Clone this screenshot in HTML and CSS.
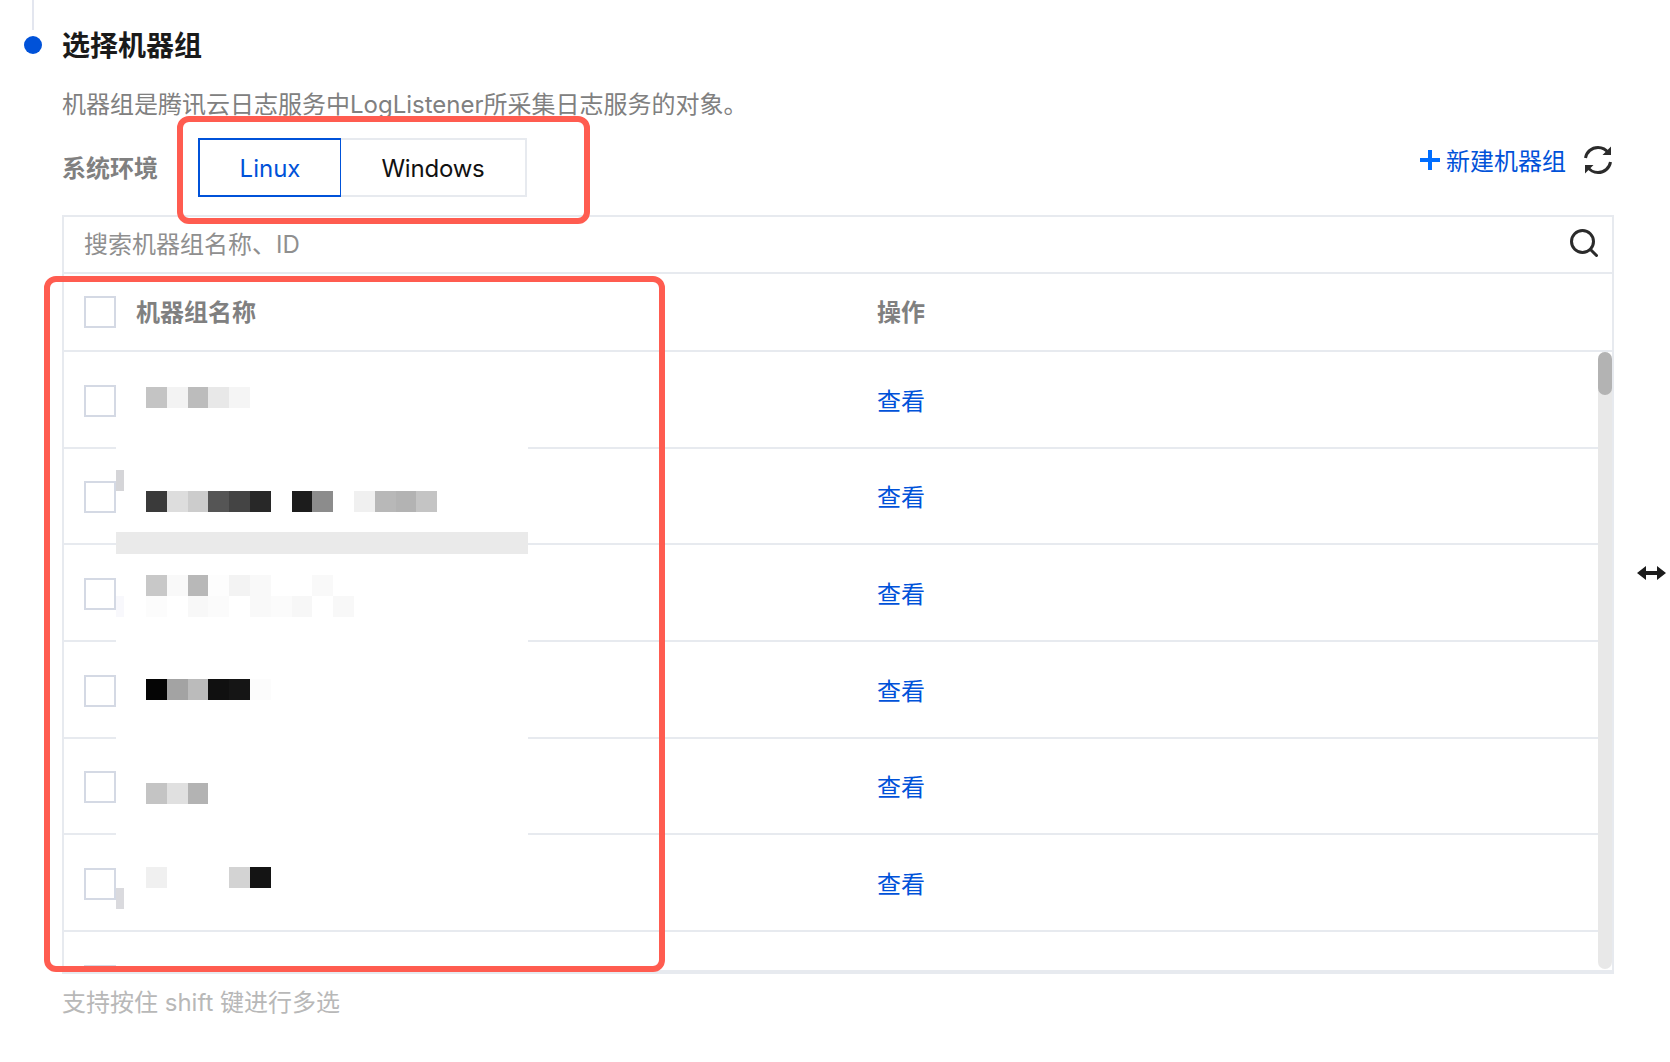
FILE: index.html
```html
<!DOCTYPE html>
<html lang="zh-CN">
<head>
<meta charset="utf-8">
<title>选择机器组</title>
<link rel="stylesheet" href="styles.css">
</head>
<body>
<main class="page">
  <div class="rail"></div>
  <h2 class="title"><span class="dot"></span><span class="title-text">选择机器组</span></h2>
  <p class="desc">机器组是腾讯云日志服务中LogListener所采集日志服务的对象。</p>

  <div class="toolbar">
    <span class="env-label">系统环境</span>
    <div class="segment">
      <button class="seg seg-on">Linux</button>
      <button class="seg seg-off">Windows</button>
    </div>
    <div class="actions">
      <a class="create">
        <svg class="plus" viewBox="0 0 20 20"><path d="M8 0h4v8h8v4h-8v8H8v-8H0V8h8z"/></svg><span class="create-text">新建机器组</span>
      </a>
      <svg class="refresh" viewBox="0 0 30 30" fill="none" stroke="#2b2b2b" stroke-width="3">
        <path d="M2.500 13C3.500 7 8.500 2.500 15 2.500c4.500 0 8 2 10.500 5.500"/>
        <path d="M27.500 17c-1 6-6 10.500-12.500 10.500-4.500 0-8-2-10.500-5.500"/>
        <path d="M28 1.500v8.500h-8.500z" fill="#2b2b2b" stroke="none"/>
        <path d="M2 28.500V20h8.500z" fill="#2b2b2b" stroke="none"/>
      </svg>
    </div>
  </div>

  <div class="search">
    <span class="placeholder">搜索机器组名称、ID</span>
    <svg class="search-icon" viewBox="0 0 28 28" fill="none" stroke="#2b2b2b" stroke-width="3">
      <circle cx="12.500" cy="12.500" r="11"/><path d="M20.500 20.500l6 6" stroke-linecap="round"/>
    </svg>
  </div>

  <div class="table">
    <div class="head">
      <span class="check check-head"></span>
      <span class="head-name">机器组名称</span>
      <span class="head-op">操作</span>
    </div>
    <div class="body">
      <div class="row">
        <span class="check"></span>
        <div class="name m1">
          <div class="mosaic"><i></i><i></i><b style="background:#c4c4c4"></b><b style="background:#f3f3f3"></b><b style="background:#bcbcbc"></b><b style="background:#e8e8e8"></b><b style="background:#f5f5f5"></b></div>
        </div>
        <a class="view">查看</a>
      </div>
      <div class="row">
        <span class="check"></span>
        <div class="name m2">
          <div class="mosaic">
            <b style="background:#d5d5d8"></b>
          </div>
          <div class="mosaic"><i></i><i></i><b style="background:#3a3a3a"></b><b style="background:#dddddd"></b><b style="background:#cccccc"></b><b style="background:#555555"></b><b style="background:#444444"></b><b style="background:#282828"></b><i></i><b style="background:#1c1c1c"></b><b style="background:#8c8c8c"></b><i></i><b style="background:#f0f0f0"></b><b style="background:#b8b8b8"></b><b style="background:#b3b3b3"></b><b style="background:#c4c4c4"></b></div>
          <div class="bar"></div>
        </div>
        <a class="view">查看</a>
      </div>
      <div class="row">
        <span class="check"></span>
        <div class="name m3">
          <div class="mosaic"><i></i><i></i><b style="background:#c8c8c8"></b><b style="background:#f9f9f9"></b><b style="background:#b8b8b8"></b><b style="background:#fdfdfd"></b><b style="background:#f3f3f3"></b><b style="background:#f9f9f9"></b><i></i><i></i><b style="background:#f9f9f9"></b></div>
          <div class="mosaic"><b style="background:#f8f8fc"></b><i></i><b style="background:#fcfcfc"></b><i></i><b style="background:#f8f8f8"></b><b style="background:#fbfbfb"></b><i></i><b style="background:#f9f9f9"></b><b style="background:#fbfbfb"></b><b style="background:#f7f7f7"></b><i></i><b style="background:#f8f8f8"></b></div>
        </div>
        <a class="view">查看</a>
      </div>
      <div class="row">
        <span class="check"></span>
        <div class="name m4">
          <div class="mosaic"><i></i><i></i><b style="background:#050505"></b><b style="background:#a3a3a3"></b><b style="background:#bbbbbb"></b><b style="background:#101010"></b><b style="background:#151515"></b><b style="background:#fcfcfc"></b></div>
        </div>
        <a class="view">查看</a>
      </div>
      <div class="row">
        <span class="check"></span>
        <div class="name m5">
          <div class="mosaic"><i></i><i></i><b style="background:#c4c4c4"></b><b style="background:#e0e0e0"></b><b style="background:#b3b3b3"></b></div>
        </div>
        <a class="view">查看</a>
      </div>
      <div class="row row-full">
        <span class="check"></span>
        <div class="name m6">
          <div class="mosaic"><i></i><i></i><b style="background:#f0f0f0"></b><i></i><i></i><i></i><b style="background:#d3d3d3"></b><b style="background:#141414"></b></div>
          <div class="mosaic"><b style="background:#dadade"></b></div>
        </div>
        <a class="view">查看</a>
      </div>
      <div class="row">
        <span class="check"></span>
      </div>
      <div class="scrollbar"><div class="thumb"></div></div>
    </div>
  </div>

  <p class="hint">支持按住 shift 键进行多选</p>

  <div class="mark mark-env"></div>
  <div class="mark mark-list"></div>
  <svg class="cursor" viewBox="0 0 29 14"><path d="M0 7L9 0v5h11V0l9 7-9 7V9H9v5z" fill="#1c1c1c"/></svg>
</main>
</body>
</html>
```

FILE: styles.css
```css
* { box-sizing: border-box; }

html, body {
  margin: 0;
  background: #fff;
}

body {
  font-family: Inter, "Noto Sans CJK SC", sans-serif;
  font-size: 24px;
  overflow: hidden;
}

.page {
  position: relative;
  width: 1670px;
  height: 1062px;
  padding-left: 62px;
  padding-right: 56px;
}

.rail {
  width: 2px;
  height: 30px;
  margin-left: -30px;
  background: #e3e6ef;
}

.title {
  display: flex;
  align-items: center;
  gap: 20px;
  height: 30px;
  margin: 0 0 0 -38px;
  font-size: 28px;
  line-height: 30px;
  font-weight: 600;
  color: #1a1a1a;
}

.title-text {
  padding-top: 2px;
}

.dot {
  width: 18px;
  height: 18px;
  border-radius: 50%;
  background: #0052d9;
}

.desc {
  height: 34px;
  margin: 28px 0 0;
  line-height: 34px;
  color: #808080;
}

.toolbar {
  display: flex;
  align-items: flex-start;
  height: 59px;
  margin-top: 16px;
}

.env-label {
  width: 136px;
  line-height: 62px;
  font-weight: 700;
  color: #808080;
}

.segment {
  display: flex;
  height: 59px;
}

.seg {
  height: 59px;
  padding: 2px 0 0;
  font: inherit;
  background: #fff;
  border: 2px solid #e7eaef;
}

.seg-on {
  width: 144px;
  color: #0052d9;
  border-color: #0052d9;
}

.seg-off {
  width: 186px;
  margin-left: -1px;
  color: #111;
  border-left: 0;
  letter-spacing: -0.2px;
}

.actions {
  display: flex;
  align-items: center;
  height: 44px;
  margin-left: auto;
  padding-right: 1px;
}

.create {
  display: flex;
  align-items: center;
  gap: 6px;
  color: #0052d9;
  line-height: 44px;
}

.create-text {
  padding-top: 3px;
}

.plus {
  width: 20px;
  height: 20px;
  fill: #006eff;
}

.refresh {
  width: 30px;
  height: 30px;
  margin-left: 17px;
}

.search {
  display: flex;
  align-items: center;
  justify-content: space-between;
  height: 59px;
  margin-top: 18px;
  padding: 0 14px 0 20px;
  border: 2px solid #e7eaef;
}

.placeholder {
  padding-bottom: 5px;
  color: #8f8f8f;
}

.search-icon {
  width: 28px;
  height: 28px;
  margin-bottom: 3px;
}

.table {
  height: 700px;
  border: 2px solid #e7eaef;
  border-top: 0;
  border-bottom-width: 4px;
}

.head {
  display: flex;
  align-items: center;
  height: 78px;
  padding-left: 20px;
  border-bottom: 2px solid #e7eaef;
  font-weight: 700;
  color: #808080;
}

.head-name {
  width: 741px;
  margin-left: 20px;
  padding-bottom: 4px;
}

.head-op {
  padding-bottom: 4px;
}

.check {
  flex: none;
  width: 32px;
  height: 32px;
  margin-top: 3px;
  background: #fff;
  border: 2px solid #d4d9e4;
}

.check-head {
  margin-top: 0;
}

.body {
  position: relative;
  height: 618px;
  overflow: hidden;
}

.row {
  display: flex;
  align-items: center;
  height: 96.67px;
  padding-left: 20px;
  border-bottom: 2px solid #e7eaef;
}

.name {
  position: relative;
  flex: none;
  align-self: stretch;
  width: 412px;
  margin-bottom: -2px;
  background: #fff;
}

.row-full .name {
  margin-bottom: 0;
}

.m1 { padding-top: 35px; }
.m2 { padding-top: 21px; z-index: 1; }
.m3 { padding-top: 30px; }
.m4 { padding-top: 37px; }
.m5 { padding-top: 44px; }
.m6 { padding-top: 32px; }

.mosaic {
  display: grid;
  grid-template-columns: 8px 22px repeat(15, 20.8px);
  grid-auto-rows: 21px;
}

.mosaic b,
.mosaic i {
  display: block;
}

.bar {
  position: absolute;
  left: 0;
  right: 0;
  top: 83px;
  height: 22px;
  background: #eaeaea;
}

.view {
  margin-left: 349px;
  color: #0052d9;
}

.scrollbar {
  position: absolute;
  top: 0;
  right: 0;
  width: 14px;
  height: 617px;
  border-radius: 7px;
  background: #e8e8e8;
}

.thumb {
  height: 43px;
  border-radius: 7px;
  background: #b3b3b3;
}

.hint {
  margin: 12px 0 0;
  line-height: 34px;
  color: #b8b8b8;
}

.mark {
  position: absolute;
  border: 6px solid #ff5c50;
  border-radius: 12px;
  pointer-events: none;
}

.mark-env {
  left: 177px;
  top: 116px;
  width: 413px;
  height: 108px;
}

.mark-list {
  left: 44px;
  top: 276px;
  width: 621px;
  height: 696px;
}

.cursor {
  position: absolute;
  left: 1637px;
  top: 566px;
  width: 29px;
  height: 14px;
}
```
